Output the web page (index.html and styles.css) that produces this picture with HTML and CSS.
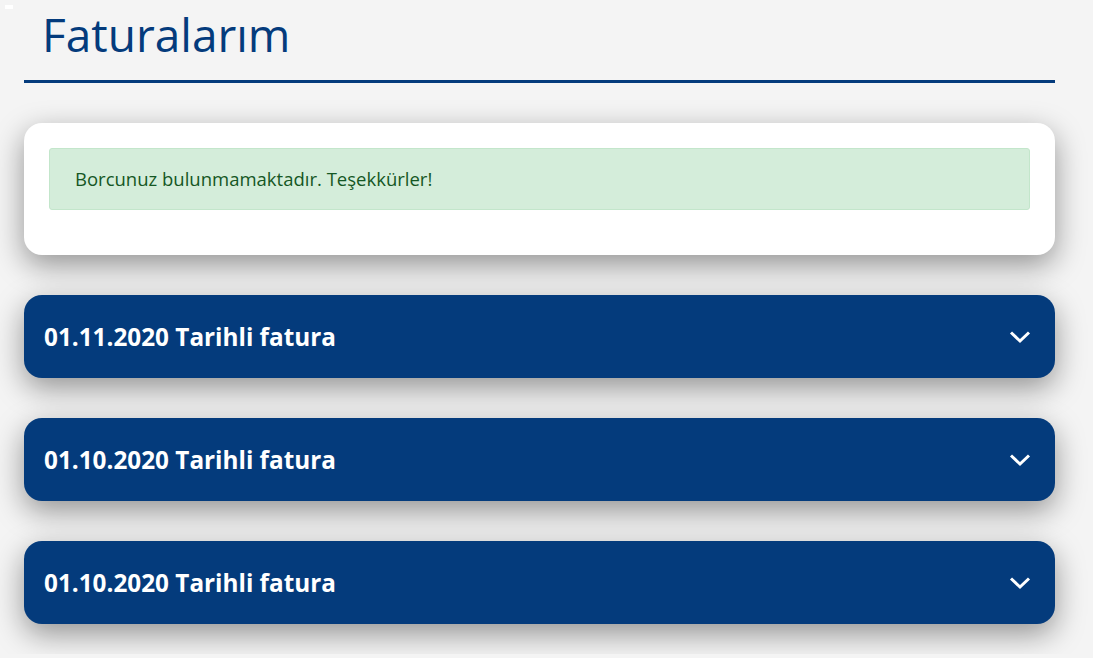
FILE: index.html
```html
<!DOCTYPE html>
<html lang="tr">
<head>
    <meta charset="UTF-8">
    <meta name="viewport" content="width=device-width, initial-scale=1.0">
    <title>Faturalarım</title>
    <link rel="stylesheet" href="styles.css">
</head>
<body>

<span class="broken-img"></span>

<div class="container">
    <h1 class="page-title">Faturalarım</h1>

    <div class="card">
        <div class="alert-success">Borcunuz bulunmamaktadır. Teşekkürler!</div>
    </div>

    <div class="invoice">
        <span class="invoice-title">01.11.2020 Tarihli fatura</span>
        <svg class="chevron" width="22" height="14" viewBox="0 0 22 14"><path d="M2 2.5 L11 11 L20 2.5" fill="none" stroke="#fff" stroke-width="3"/></svg>
    </div>

    <div class="invoice">
        <span class="invoice-title">01.10.2020 Tarihli fatura</span>
        <svg class="chevron" width="22" height="14" viewBox="0 0 22 14"><path d="M2 2.5 L11 11 L20 2.5" fill="none" stroke="#fff" stroke-width="3"/></svg>
    </div>

    <div class="invoice">
        <span class="invoice-title">01.10.2020 Tarihli fatura</span>
        <svg class="chevron" width="22" height="14" viewBox="0 0 22 14"><path d="M2 2.5 L11 11 L20 2.5" fill="none" stroke="#fff" stroke-width="3"/></svg>
    </div>
</div>

</body>
</html>
```

FILE: styles.css
```css
html {
    overflow: hidden;
}
body {
    font-family: "Open Sans", "Noto Sans", sans-serif;
    background-color: #f4f4f4;
    margin: 0;
    padding: 0;
}
.broken-img {
    position: absolute;
    left: 5px;
    top: 5px;
    width: 8px;
    height: 4px;
    background-color: #fff;
}
.container {
    width: 1031px;
    margin-left: 24px;
    padding-bottom: 30px;
}
.page-title {
    margin: 0;
    padding: 0 0 12px 18px;
    font-size: 46px;
    font-weight: 400;
    line-height: 68px;
    color: #043b7c;
    border-bottom: 3px solid #043b7c;
}
.card {
    margin-top: 40px;
    background-color: #fff;
    border-radius: 18px;
    padding: 25px 25px 45px 25px;
    box-shadow: 0 10px 30px rgba(0, 0, 0, 0.4);
}
.alert-success {
    background-color: #d4edda;
    border: 1px solid #c3e6cb;
    border-radius: 3px;
    color: #155724;
    font-size: 18.5px;
    padding: 0 25px;
    height: 60px;
    line-height: 60px;
}
.invoice {
    margin-top: 40px;
    height: 83px;
    background-color: #043b7c;
    border-radius: 18px;
    padding: 0 24px 0 20px;
    display: flex;
    align-items: center;
    justify-content: space-between;
    box-shadow: 0 10px 30px rgba(0, 0, 0, 0.4);
}
.invoice-title {
    color: #fff;
    font-size: 24.3px;
    font-weight: 700;
}
.chevron {
    display: block;
}
```
